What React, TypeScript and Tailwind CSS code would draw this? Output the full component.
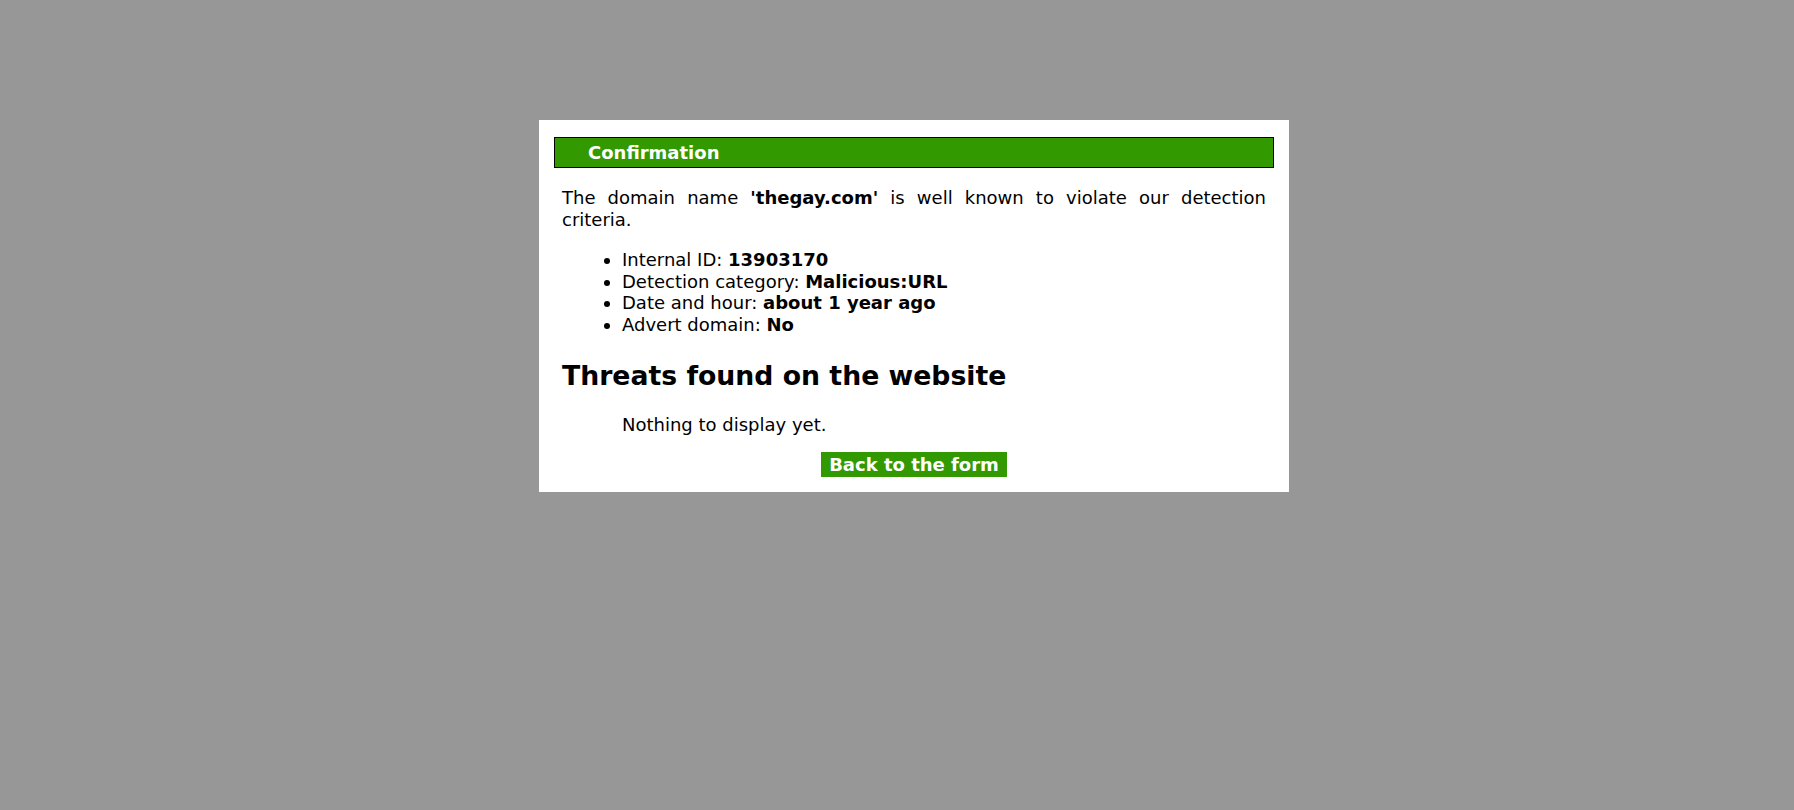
import React from 'react';

const details = [
  { label: 'Internal ID:', value: '13903170' },
  { label: 'Detection category:', value: 'Malicious:URL' },
  { label: 'Date and hour:', value: 'about 1 year ago' },
  { label: 'Advert domain:', value: 'No' },
];

const App = () => {
  return (
    <div className="min-h-[810px] w-full bg-[#979797] pt-[120px] font-['DejaVu_Sans',Verdana,sans-serif] text-black">
      <div className="ml-[539px] w-[750px] bg-white px-[15px] pt-[17px] pb-[15px]">
        {/* Header bar */}
        <div className="h-[31px] border border-black bg-[#339900] pl-[33px] text-[18px] leading-[29px] font-bold text-white">
          Confirmation
        </div>

        <div className="px-[8px]">
          <p className="mt-[19px] text-justify text-[18px] leading-[22px]">
            The domain name <b>'thegay.com'</b> is well known to violate our detection criteria.
          </p>

          <ul className="mt-[18px] list-disc pl-[60px] text-[18px] leading-[21.7px]">
            {details.map((d) => (
              <li key={d.label}>
                {d.label} <b>{d.value}</b>
              </li>
            ))}
          </ul>

          <h2 className="mt-[23px] text-[26.7px] leading-[33px] font-bold">Threats found on the website</h2>

          <p className="mt-[22px] pl-[60px] text-[18px] leading-[22px]">Nothing to display yet.</p>

          <div className="mt-[16px] flex justify-center">
            <button className="h-[25px] bg-[#339900] px-[8px] text-[18px] leading-[25px] font-bold text-white">
              Back to the form
            </button>
          </div>
        </div>
      </div>
    </div>
  );
};

export default App;
